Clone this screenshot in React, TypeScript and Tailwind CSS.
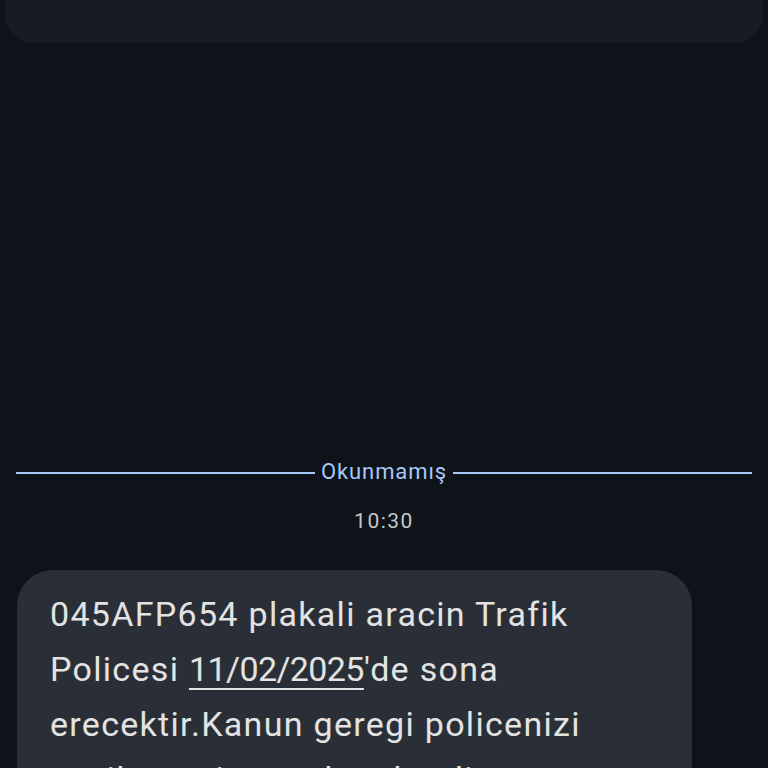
import React from "react";

export default function App() {
  return (
    <div
      className="w-[768px] h-[768px] overflow-hidden bg-[#0e131a] flex flex-col"
      style={{ fontFamily: "Roboto, 'Noto Sans', sans-serif" }}
    >
      <div className="mx-[5px] h-[43px] shrink-0 rounded-b-[28px] bg-[#171c24]" />
      <div className="h-[415px] shrink-0" />
      <div className="flex items-center px-[16px] h-[30px] shrink-0">
        <div className="flex-1 h-[2px] bg-[#a8c7fa]" />
        <div className="px-[6px] text-[22px] leading-[30px] tracking-[0.9px] text-[#a8c7fa] -mt-[2px]">Okunmamış</div>
        <div className="flex-1 h-[2px] bg-[#a8c7fa]" />
      </div>
      <div className="mt-[19px] h-[28px] shrink-0 text-center text-[21px] leading-[28px] tracking-[1.5px] text-[#c4c7c5]">10:30</div>
      <div className="mt-[35px] ml-[17px] w-[675px] rounded-[36px] bg-[#2a2f37] pl-[33px] pr-[10px] pt-[17px] pb-[20px] shrink-0">
        <p className="text-[34px] leading-[55px] text-[#e3e3e3] tracking-[1.3px] whitespace-nowrap">
          045AFP654 plakali aracin Trafik
          <br />
          Policesi{" "}
          <span className="underline decoration-[2px] underline-offset-[7px] tracking-[-0.6px]">11/02/2025</span>'de sona
          <br />
          erecektir.Kanun geregi policenizi
          <br />
          yenilemeniz gerekmektedir
        </p>
      </div>
    </div>
  );
}
